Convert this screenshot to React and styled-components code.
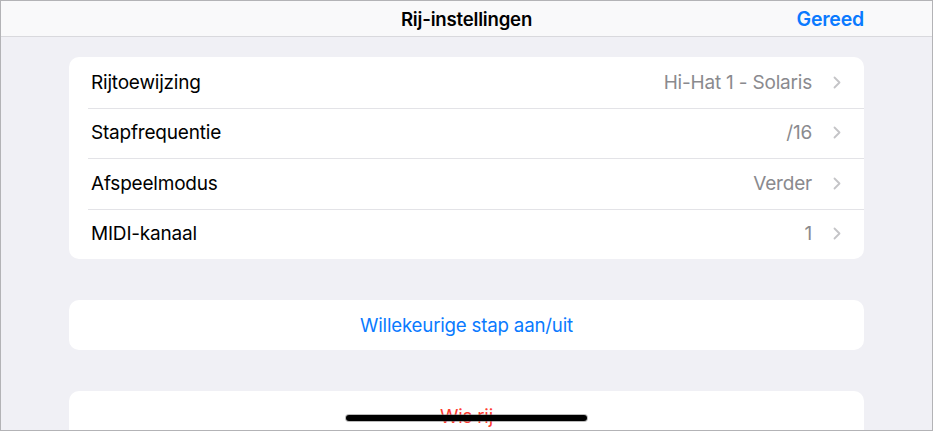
import React from 'react'
import styled, { createGlobalStyle } from 'styled-components'

const GlobalStyle = createGlobalStyle`
  html, body {
    margin: 0;
    padding: 0;
    background: #ffffff;
  }
  body {
    font-family: Inter, "Liberation Sans", sans-serif;
    -webkit-font-smoothing: antialiased;
  }
`

const Frame = styled.div`
  position: relative;
  width: 933px;
  height: 431px;
  box-sizing: border-box;
  border: 1px solid #b3b3b6;
  background: #f0f0f5;
  overflow: hidden;
`

const NavBar = styled.header`
  height: 35px;
  display: grid;
  grid-template-columns: 1fr auto 1fr;
  align-items: center;
  background: #f9f9fa;
  border-bottom: 1px solid #d9d9dd;
  padding: 0 68px 0 68px;
`

const Title = styled.h1`
  grid-column: 2;
  margin: 0;
  font-size: 18.6px;
  font-weight: 600;
  color: #000;
  letter-spacing: -0.2px;
`

const Done = styled.button`
  grid-column: 3;
  justify-self: end;
  border: none;
  background: none;
  padding: 0;
  font-family: inherit;
  font-size: 19.5px;
  font-weight: 600;
  color: #0a7aff;
  letter-spacing: -0.2px;
`

const Content = styled.main`
  display: flex;
  flex-direction: column;
  gap: 41px;
  padding: 20px 68px 0 68px;
`

const Card = styled.section`
  background: #ffffff;
  border-radius: 10px;
  overflow: hidden;
`

const Row = styled.div`
  position: relative;
  height: 50.5px;
  display: flex;
  align-items: center;
  padding: 0 23px 0 22px;
  font-size: 19px;
  color: #000;
  letter-spacing: -0.2px;

  & + &::before {
    content: '';
    position: absolute;
    top: 0;
    left: 19px;
    right: 0;
    height: 1px;
    background: #e3e3e7;
  }
`

const Label = styled.span`
  flex: 1;
`

const Value = styled.span`
  color: #8a8a8e;
  margin-right: 21px;
`

const Chevron = () => (
  <svg width="8" height="13" viewBox="0 0 8 13" fill="none">
    <path d="M1.5 1.5 L6.5 6.5 L1.5 11.5" stroke="#c4c4c7" strokeWidth="1.8" strokeLinecap="round" strokeLinejoin="round" />
  </svg>
)

const ActionRow = styled.button`
  display: block;
  width: 100%;
  height: 50px;
  border: none;
  background: none;
  padding: 0;
  font-family: inherit;
  font-size: 18.7px;
  letter-spacing: -0.2px;
  color: ${props => (props.destructive ? '#ff3b30' : '#0a7aff')};
`

const HomeIndicator = styled.div`
  position: absolute;
  left: 345px;
  bottom: 9px;
  width: 241px;
  height: 6px;
  border-radius: 3px;
  background: #000;
  box-shadow: 0 0 0 1px rgba(120, 120, 120, 0.5);
`

const settings = [
  { label: 'Rijtoewijzing', value: 'Hi-Hat 1 - Solaris' },
  { label: 'Stapfrequentie', value: '/16' },
  { label: 'Afspeelmodus', value: 'Verder' },
  { label: 'MIDI-kanaal', value: '1' },
]

export default function App() {
  return (
    <>
      <GlobalStyle />
      <Frame>
        <NavBar>
          <Title>Rij-instellingen</Title>
          <Done>Gereed</Done>
        </NavBar>
        <Content>
          <Card>
            {settings.map(s => (
              <Row key={s.label}>
                <Label>{s.label}</Label>
                <Value>{s.value}</Value>
                <Chevron />
              </Row>
            ))}
          </Card>
          <Card>
            <ActionRow>Willekeurige stap aan/uit</ActionRow>
          </Card>
          <Card>
            <ActionRow destructive>Wis rij</ActionRow>
          </Card>
        </Content>
        <HomeIndicator />
      </Frame>
    </>
  )
}
